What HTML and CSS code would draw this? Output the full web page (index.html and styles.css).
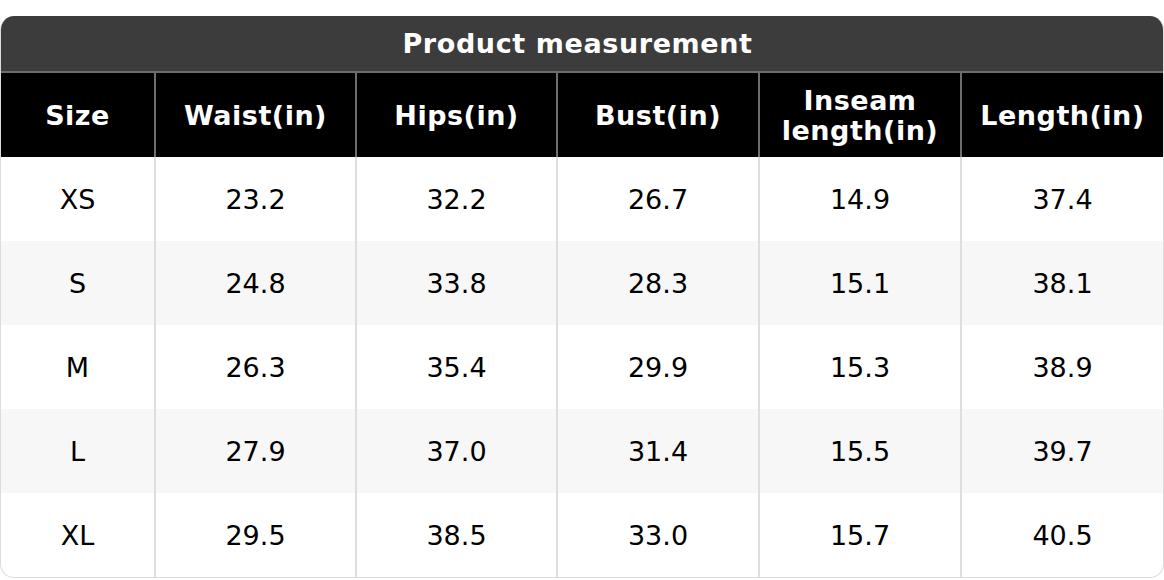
FILE: index.html
```html
<!DOCTYPE html>
<html>
<head>
<meta charset="utf-8">
<link rel="stylesheet" href="styles.css">
</head>
<body>
<div class="card">
  <div class="title">Product measurement</div>
  <table class="sizes">
    <colgroup>
      <col class="c1"><col class="c2"><col class="c2"><col class="c3"><col class="c3"><col>
    </colgroup>
    <thead>
      <tr><th>Size</th><th>Waist(in)</th><th>Hips(in)</th><th>Bust(in)</th><th>Inseam length(in)</th><th>Length(in)</th></tr>
    </thead>
    <tbody>
      <tr><td>XS</td><td>23.2</td><td>32.2</td><td>26.7</td><td>14.9</td><td>37.4</td></tr>
      <tr><td>S</td><td>24.8</td><td>33.8</td><td>28.3</td><td>15.1</td><td>38.1</td></tr>
      <tr><td>M</td><td>26.3</td><td>35.4</td><td>29.9</td><td>15.3</td><td>38.9</td></tr>
      <tr><td>L</td><td>27.9</td><td>37.0</td><td>31.4</td><td>15.5</td><td>39.7</td></tr>
      <tr><td>XL</td><td>29.5</td><td>38.5</td><td>33.0</td><td>15.7</td><td>40.5</td></tr>
    </tbody>
  </table>
</div>
</body>
</html>
```
FILE: styles.css
```css
html, body {
  margin: 0;
  padding: 0;
  background: #fff;
}
body {
  padding-top: 16px;
  font-family: "DejaVu Sans", sans-serif;
  color: #000;
}
.card {
  width: 1164px;
  box-sizing: border-box;
  border: 1px solid #dcdcdc;
  border-top: none;
  border-radius: 14px;
  overflow: hidden;
}
.title {
  background: #3c3c3c;
  color: #fff;
  font-weight: bold;
  font-size: 27px;
  letter-spacing: 0.6px;
  text-align: center;
  height: 55px;
  line-height: 56px;
  padding-right: 9px;
  border-bottom: 2px solid #6e6e6e;
}
.sizes {
  width: 100%;
  border-collapse: collapse;
  table-layout: fixed;
}
.c1 { width: 154px; }
.c2 { width: 201px; }
.c3 { width: 202px; }
.sizes th {
  background: #000;
  color: #fff;
  font-weight: bold;
  font-size: 27px;
  letter-spacing: 0.5px;
  line-height: 30px;
  height: 83px;
  padding: 1px 8px 0;
  border-left: 2px solid #6e6e6e;
  text-align: center;
}
.sizes td {
  font-size: 27px;
  height: 83px;
  padding: 1px 0 0;
  text-align: center;
  border-left: 2px solid #dedede;
}
.sizes th:first-child, .sizes td:first-child { border-left: none; }
.sizes tbody tr:nth-child(even) td { background: #f7f7f7; }
```
